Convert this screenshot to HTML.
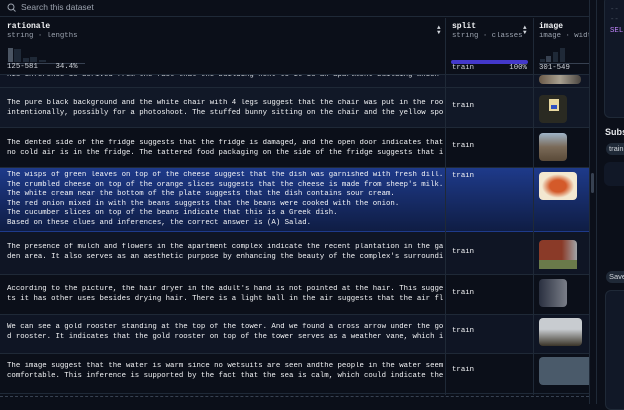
<!DOCTYPE html>
<html><head><style>
*{margin:0;padding:0;box-sizing:border-box}
body{width:624px;height:404px;background:#0b0f19;overflow:hidden;position:relative;font-family:"Liberation Mono",monospace;color:#e5e7eb}
.abs{position:absolute}
.t{font-size:7.35px;line-height:9.6px;white-space:pre;overflow:hidden;color:#f3f4f6}
.row{position:absolute;left:0;width:589px;border-bottom:1px solid #1f2937}
.c1{position:absolute;left:7px;width:436px}
.c2{position:absolute;left:452px}
.vl{position:absolute;top:18px;width:1px;height:377px;background:#1f2937}
.img{position:absolute;left:539px;border-radius:4px}
.sans{font-family:"Liberation Sans",sans-serif}
</style></head><body>
<div class="abs sans" style="left:0;top:0;width:589px;height:17px;border-bottom:1px solid #1f2937;background:#0b0f19"></div>
<svg class="abs" style="left:7px;top:3px" width="10" height="10" viewBox="0 0 10 10"><circle cx="4" cy="4" r="3" fill="none" stroke="#9ca3af" stroke-width="1"/><line x1="6.2" y1="6.2" x2="8.5" y2="8.5" stroke="#9ca3af"/></svg>
<div class="abs sans" style="left:21px;top:2px;font-size:8.5px;color:#9ca3af">Search this dataset</div>
<div class="row" style="top:75px;height:13px;background:#0f1524"><div class="c1 t" style="top:-4px;color:#d1d5db">his inference is derived from the fact that the building next to it is an apartment building which i…</div></div>
<div class="row" style="top:88px;height:40px;background:#111827"><div class="c1 t" style="top:11px">The pure black background and the white chair with 4 legs suggest that the chair was put in the room
intentionally, possibly for a photoshoot. The stuffed bunny sitting on the chair and the yellow spo…</div><div class="c2 t" style="top:14px">train</div></div>
<div class="row" style="top:128px;height:40px;background:#0b0f19"><div class="c1 t" style="top:11px">The dented side of the fridge suggests that the fridge is damaged, and the open door indicates that
no cold air is in the fridge. The tattered food packaging on the side of the fridge suggests that i…</div><div class="c2 t" style="top:14px">train</div></div>
<div class="row" style="top:168px;height:64px;background:linear-gradient(#1e3a8a,#0f1d44);border-bottom:1px solid #1e3a8a"><div class="c1 t" style="top:3px">The wisps of green leaves on top of the cheese suggest that the dish was garnished with fresh dill.
The crumbled cheese on top of the orange slices suggests that the cheese is made from sheep's milk.
The white cream near the bottom of the plate suggests that the dish contains sour cream.
The red onion mixed in with the beans suggests that the beans were cooked with the onion.
The cucumber slices on top of the beans indicate that this is a Greek dish.
Based on these clues and inferences, the correct answer is (A) Salad.</div><div class="c2 t" style="top:4px">train</div></div>
<div class="row" style="top:232px;height:43px;background:#0f1524"><div class="c1 t" style="top:11px">The presence of mulch and flowers in the apartment complex indicate the recent plantation in the gar
den area. It also serves as an aesthetic purpose by enhancing the beauty of the complex's surroundi…</div><div class="c2 t" style="top:16px">train</div></div>
<div class="row" style="top:275px;height:40px;background:#0b0f19"><div class="c1 t" style="top:10px">According to the picture, the hair dryer in the adult's hand is not pointed at the hair. This sugges
ts it has other uses besides drying hair. There is a light ball in the air suggests that the air fl…</div><div class="c2 t" style="top:14px">train</div></div>
<div class="row" style="top:315px;height:39px;background:#0f1524"><div class="c1 t" style="top:8px">We can see a gold rooster standing at the top of the tower. And we found a cross arrow under the gol
d rooster. It indicates that the gold rooster on top of the tower serves as a weather vane, which i…</div><div class="c2 t" style="top:12px">train</div></div>
<div class="row" style="top:354px;height:40px;background:#0b0f19"><div class="c1 t" style="top:8px">The image suggest that the water is warm since no wetsuits are seen andthe people in the water seem
comfortable. This inference is supported by the fact that the sea is calm, which could indicate the…</div><div class="c2 t" style="top:12px">train</div></div>
<div class="abs" style="left:0;top:396px;width:589px;border-top:1px dashed #374151"></div>
<div class="img" style="top:75px;width:42px;height:9px;background:linear-gradient(90deg,#6b5a48,#a8a090,#4a4540)"></div>
<div class="img" style="top:95px;width:28px;height:28px;background:#2a2a22"><div class="abs" style="left:10px;top:4px;width:10px;height:12px;background:#e8d8a0"></div><div class="abs" style="left:12px;top:10px;width:6px;height:4px;background:#3050c0"></div></div>
<div class="img" style="top:133px;width:28px;height:28px;background:linear-gradient(#9fb4c8,#7a6a58 50%,#5a4a38)"></div>
<div class="img" style="top:172px;width:38px;height:28px;background:radial-gradient(#d45a2a 30%,#f3e8d0 60%)"></div>
<div class="img" style="top:240px;width:38px;height:29px;background:linear-gradient(90deg,#8a3a28 60%,#a0a4a8);"><div class="abs" style="left:0;top:20px;width:38px;height:9px;background:#6a7a4a"></div></div>
<div class="img" style="top:279px;width:28px;height:28px;background:linear-gradient(90deg,#2a3040,#7a7e88)"></div>
<div class="img" style="top:318px;width:43px;height:28px;background:linear-gradient(#c8ccd0 40%,#3a3428)"></div>
<div class="img" style="top:357px;width:50px;height:28px;background:#4a5a6a;border-radius:4px 0 0 4px"></div>
<div class="abs" style="left:0;top:18px;width:589px;height:57px;background:#0b0f19;border-bottom:1px solid #1f2937"></div>
<div class="abs t" style="left:7px;top:22px;font-weight:bold;font-size:8px">rationale</div>
<div class="abs t" style="left:7px;top:32px;color:#9ca3af">string · lengths</div>
<div class="abs" style="left:8px;top:48px;width:5px;height:14px;background:#4b5563"></div>
<div class="abs" style="left:14px;top:49px;width:7px;height:13px;background:#1f2937"></div>
<div class="abs" style="left:23px;top:58px;width:6px;height:4px;background:#1f2937"></div>
<div class="abs" style="left:30px;top:57px;width:7px;height:5px;background:#1f2937"></div>
<div class="abs" style="left:39px;top:60px;width:7px;height:2px;background:#1f2937"></div>
<div class="abs" style="left:7px;top:63px;width:78px;height:1px;background:#374151"></div>
<div class="abs t" style="left:7px;top:63px;color:#d1d5db">125-581    34.4%</div>
<div class="abs" style="left:437px;top:25px;font-size:6px;color:#d1d5db;line-height:5px">▲<br>▼</div>
<div class="abs t" style="left:452px;top:22px;font-weight:bold;font-size:8px">split</div>
<div class="abs t" style="left:452px;top:32px;color:#9ca3af">string · classes</div>
<div class="abs" style="left:451px;top:60px;width:77px;height:4px;border-radius:2px;background:#4338ca"></div>
<div class="abs t" style="left:452px;top:64px;color:#d1d5db">train        100%</div>
<div class="abs" style="left:523px;top:25px;font-size:6px;color:#d1d5db;line-height:5px">▲<br>▼</div>
<div class="abs t" style="left:539px;top:22px;font-weight:bold;font-size:8px">image</div>
<div class="abs t" style="left:539px;top:32px;color:#9ca3af;width:50px">image · widths</div>
<div class="abs" style="left:540px;top:59px;width:5px;height:3px;background:#1f2937"></div>
<div class="abs" style="left:546px;top:56px;width:5px;height:6px;background:#374151"></div>
<div class="abs" style="left:553px;top:52px;width:5px;height:10px;background:#1f2937"></div>
<div class="abs" style="left:560px;top:48px;width:5px;height:14px;background:#1f2937"></div>
<div class="abs" style="left:539px;top:63px;width:50px;height:1px;background:#374151"></div>
<div class="abs t" style="left:539px;top:64px;color:#d1d5db">301-549</div>
<div class="vl" style="left:445px"></div>
<div class="vl" style="left:533px"></div>
<div class="abs" style="left:589px;top:0;width:1px;height:404px;background:#1f2937"></div>
<div class="abs" style="left:591px;top:173px;width:3px;height:20px;border-radius:2px;background:#374151"></div>
<div class="abs" style="left:596px;top:0;width:1px;height:404px;background:#1f2937"></div>
<div class="abs" style="left:604px;top:-4px;width:30px;height:122px;border-radius:6px;background:#111827;border:1px solid #1f2937"></div>
<div class="abs t" style="left:610px;top:6px;color:#4b5563">--</div>
<div class="abs t" style="left:610px;top:16px;color:#4b5563">--</div>
<div class="abs t" style="left:610px;top:27px;color:#c084fc">SEL</div>
<div class="abs sans" style="left:605px;top:127px;font-size:9px;font-weight:bold;color:#e5e7eb">Subs</div>
<div class="abs sans" style="left:606px;top:143px;width:30px;height:12px;border-radius:6px;background:#1f2937;font-size:7.5px;line-height:12px;padding-left:3px;color:#d1d5db">train</div>
<div class="abs" style="left:604px;top:162px;width:30px;height:24px;border-radius:6px;background:#111827"></div>
<div class="abs sans" style="left:606px;top:271px;width:30px;height:12px;border-radius:6px;background:#1f2937;font-size:7.5px;line-height:12px;padding-left:3px;color:#d1d5db">Save</div>
<div class="abs" style="left:605px;top:290px;width:30px;height:120px;border-radius:6px;background:#111827;border:1px solid #1f2937"></div>
</body></html>
